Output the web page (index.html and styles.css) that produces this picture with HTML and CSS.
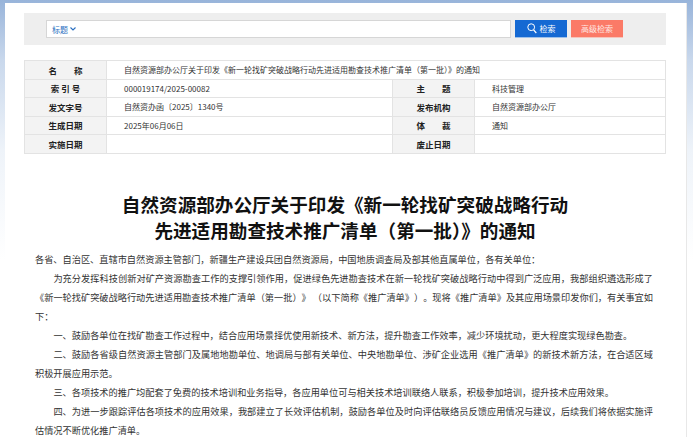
FILE: index.html
```html
<!DOCTYPE html>
<html>
<head>
  <meta charset="utf-8">
  <title>自然资源部办公厅关于印发《新一轮找矿突破战略行动先进适用勘查技术推广清单（第一批）》的通知</title>
  <link rel="stylesheet" href="styles.css">
</head>
<body>
<div class="page">
  <div class="search-bar">
    <div class="search-input">
      <span class="field-select">标题 <svg width="6" height="4" viewBox="0 0 6 4"><path d="M0.5 0.5 L3 3 L5.5 0.5" fill="none" stroke="#2a6fc0" stroke-width="1.1"/></svg></span>
    </div>
    <button class="btn btn-search">
      <svg width="10" height="11" viewBox="0 0 10 11"><circle cx="4.2" cy="4.2" r="3.4" fill="none" stroke="#fff" stroke-width="1"/><path d="M6.6 6.8 L9.3 10" stroke="#fff" stroke-width="1.2"/></svg>
      检索
    </button>
    <button class="btn btn-advanced">高级检索</button>
  </div>

  <table class="meta">
    <tr>
      <th>名　　称</th>
      <td colspan="3">自然资源部办公厅关于印发《新一轮找矿突破战略行动先进适用勘查技术推广清单（第一批）》的通知</td>
    </tr>
    <tr>
      <th>索 引 号</th>
      <td>000019174/2025-00082</td>
      <th>主　　题</th>
      <td>科技管理</td>
    </tr>
    <tr>
      <th>发文字号</th>
      <td>自然资办函〔2025〕1340号</td>
      <th>发布机构</th>
      <td>自然资源部办公厅</td>
    </tr>
    <tr>
      <th>生成日期</th>
      <td>2025年06月06日</td>
      <th>体　　裁</th>
      <td>通知</td>
    </tr>
    <tr>
      <th>实施日期</th>
      <td></td>
      <th>废止日期</th>
      <td></td>
    </tr>
  </table>

  <h1 class="doc-title">自然资源部办公厅关于印发《新一轮找矿突破战略行动<br>先进适用勘查技术推广清单（第一批）》的通知</h1>

  <div class="doc-body">
    <p class="flush">各省、自治区、直辖市自然资源主管部门，新疆生产建设兵团自然资源局，中国地质调查局及部其他直属单位，各有关单位：</p>
    <p>为充分发挥科技创新对矿产资源勘查工作的支撑引领作用，促进绿色先进勘查技术在新一轮找矿突破战略行动中得到广泛应用，我部组织遴选形成了《新一轮找矿突破战略行动先进适用勘查技术推广清单（第一批）》 （以下简称《推广清单》）。现将《推广清单》及其应用场景印发你们，有关事宜如下：</p>
    <p>一、鼓励各单位在找矿勘查工作过程中，结合应用场景择优使用新技术、新方法，提升勘查工作效率，减少环境扰动，更大程度实现绿色勘查。</p>
    <p>二、鼓励各省级自然资源主管部门及属地地勘单位、地调局与部有关单位、中央地勘单位、涉矿企业选用《推广清单》的新技术新方法，在合适区域积极开展应用示范。</p>
    <p>三、各项技术的推广均配套了免费的技术培训和业务指导，各应用单位可与相关技术培训联络人联系，积极参加培训，提升技术应用效果。</p>
    <p>四、为进一步跟踪评估各项技术的应用效果，我部建立了长效评估机制，鼓励各单位及时向评估联络员反馈应用情况与建议，后续我们将依据实施评估情况不断优化推广清单。</p>
  </div>
</div>
</body>
</html>
```

FILE: styles.css
```css
html, body {
  margin: 0;
  padding: 0;
}

body {
  background: linear-gradient(180deg, #98b4da 0, #c9d8ec 60px, #eef3f9 150px, #fff 260px);
  font-family: "Noto Sans CJK SC", "Noto Sans", sans-serif;
  color: #333;
  height: 437px;
  overflow: hidden;
}

.page {
  margin: 3px 6px 0 5px;
  padding: 10px 20px 0 19px;
  background: #fff;
  border-right: 1px solid #e8e8e8;
  height: 440px;
  box-sizing: border-box;
}

/* search */
.search-bar {
  display: flex;
  align-items: center;
  gap: 4px;
  background: #eeeeee;
  height: 32px;
  padding: 0 43px 0 22px;
}

.search-input {
  flex: 1;
  height: 18px;
  box-sizing: border-box;
  background: #fff;
  border: 1px solid #d6d6d6;
  display: flex;
  align-items: center;
  padding-left: 5px;
}

.field-select {
  font-size: 8px;
  color: #2a6fc0;
  display: flex;
  align-items: center;
  gap: 2px;
}

.btn {
  height: 18px;
  border: none;
  padding: 0;
  font-family: inherit;
  font-size: 8px;
  color: #fff;
  display: flex;
  align-items: center;
  justify-content: center;
  gap: 3px;
}

.btn-search {
  width: 52px;
  background: #1569d3;
  border-bottom: 1px solid #9dc0ea;
}

.btn-advanced {
  width: 52px;
  background: #fb7a67;
  color: #ffe9e4;
  border-bottom: 1px solid #f7c4bb;
}

/* meta table */
.meta {
  width: 100%;
  margin-top: 15px;
  border-collapse: collapse;
  font-size: 8px;
}

.meta th,
.meta td {
  border: 1px solid #e3e3e3;
  height: 17.5px;
  padding: 0;
}

.meta th {
  width: 81px;
  background: #f3f3f3;
  color: #222;
  font-weight: bold;
  font-size: 8.5px;
}

.meta td {
  padding-left: 17px;
  color: #333;
}

.meta td:nth-child(2) {
  width: 268px;
}

/* document */
.doc-title {
  margin: 37px 0 0;
  font-size: 18.6px;
  line-height: 26px;
  font-weight: bold;
  color: #111;
  text-align: center;
}

.doc-body {
  width: 618px;
  margin: 7px 0 0 11px;
  font-size: 9.2px;
  line-height: 19px;
  color: #333;
  text-align: justify;
  text-spacing-trim: space-all;
}

.doc-body p {
  margin: 0;
  text-indent: 2em;
}

.doc-body p.flush {
  text-indent: 0;
}
```
